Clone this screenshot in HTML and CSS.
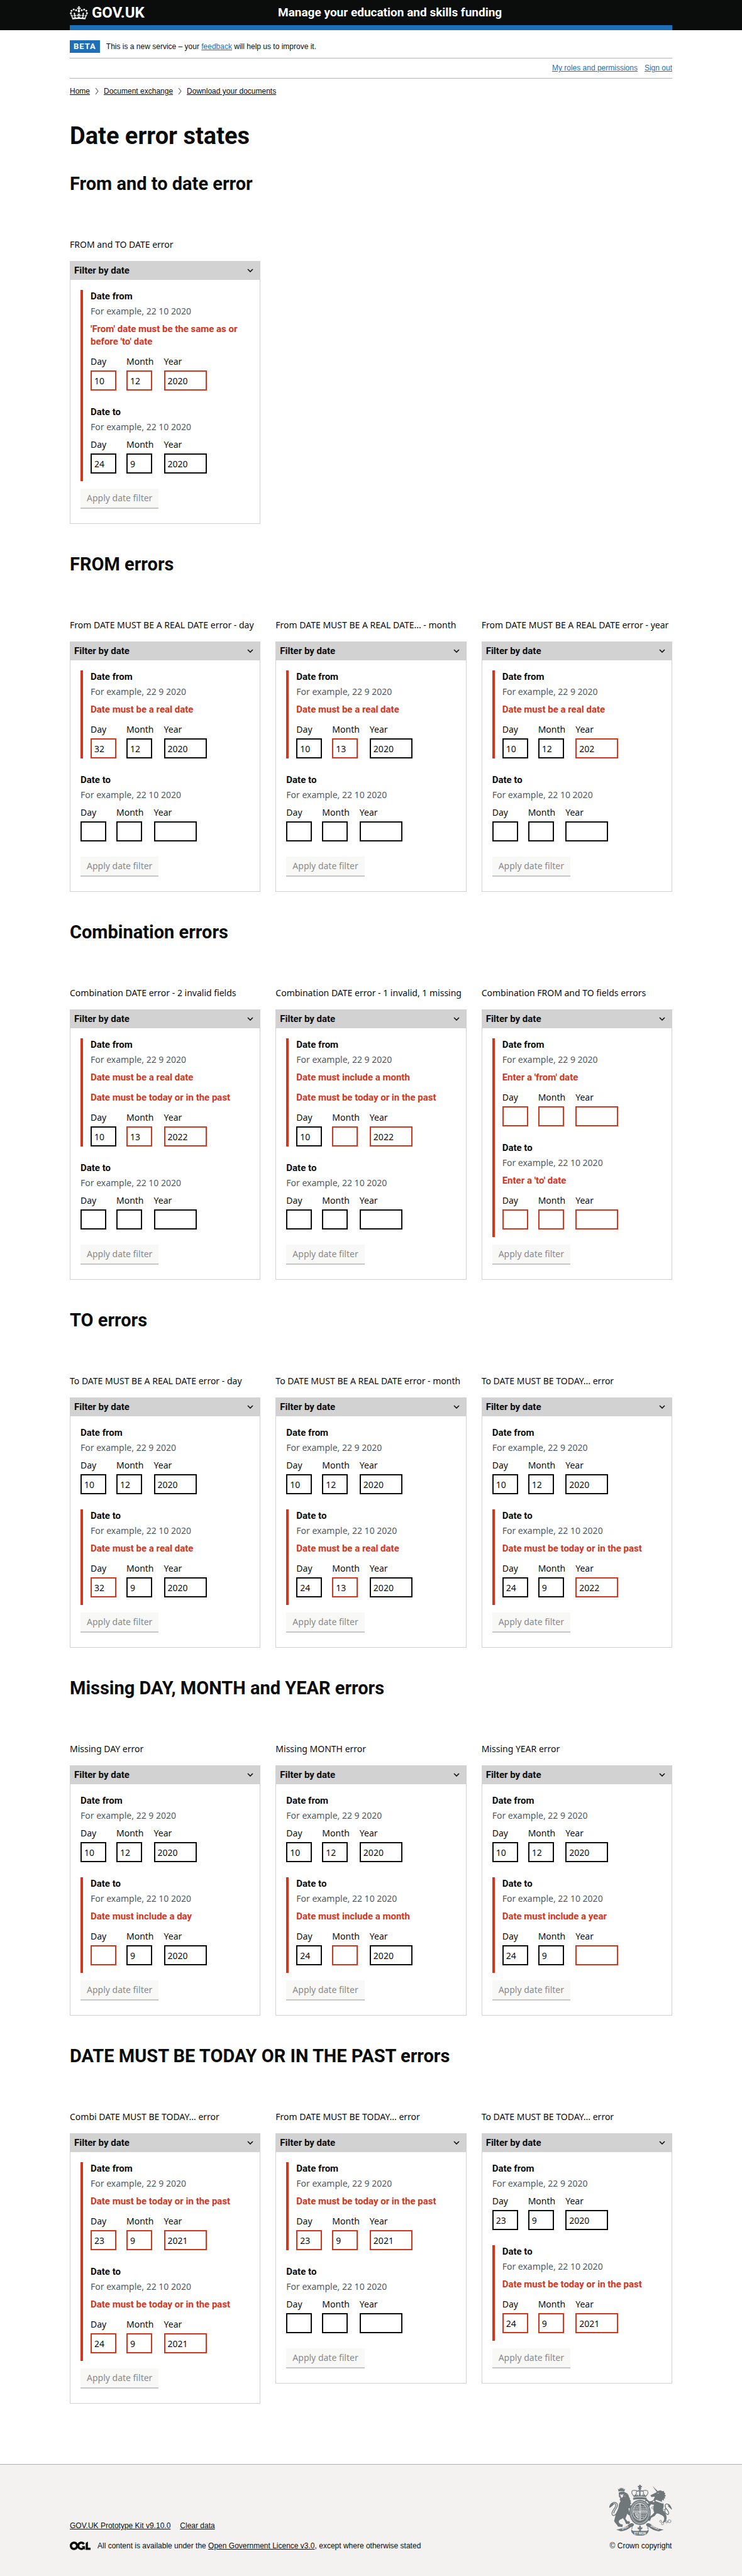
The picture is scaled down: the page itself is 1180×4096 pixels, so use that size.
FILE: index.html
```html
<!DOCTYPE html>
<html lang="en">
<head>
<meta charset="utf-8">
<meta name="viewport" content="width=device-width, initial-scale=1">
<title>Date error states - Manage your education and skills funding</title>
<link rel="stylesheet" href="styles.css">
</head>
<body>
<svg class="sprite" aria-hidden="true">
  <symbol id="chevron-down" viewBox="0 0 10 6"><path d="M1 1l4 4 4-4" fill="none" stroke="currentColor" stroke-width="1.6"/></symbol>
  <symbol id="chevron-right" viewBox="0 0 6 12"><path d="M1 1l4 5-4 5" fill="none" stroke="currentColor" stroke-width="1.1"/></symbol>
</svg>

<header class="header">
  <div class="header-inner">
    <a class="logo" href="#">
      <svg class="crown" viewBox="0 0 132 97" aria-hidden="true"><path fill="currentColor" fill-rule="evenodd" d="M25 30.2c3.5 1.5 7.7-.2 9.1-3.7 1.5-3.6-.2-7.8-3.9-9.2-3.6-1.4-7.6.3-9.1 3.9-1.4 3.5.3 7.5 3.9 9zM9 39.5c3.6 1.5 7.8-.2 9.2-3.7 1.5-3.6-.2-7.8-3.9-9.1-3.6-1.5-7.6.2-9.1 3.8-1.4 3.5.3 7.5 3.8 9zM4.4 57.2c3.5 1.5 7.7-.2 9.1-3.8 1.5-3.6-.2-7.7-3.9-9.1-3.5-1.5-7.6.3-9.1 3.8-1.4 3.5.3 7.6 3.9 9.1zm38.3-21.4c3.5 1.5 7.7-.2 9.1-3.8 1.5-3.6-.2-7.7-3.9-9.1-3.6-1.5-7.6.3-9.1 3.8-1.3 3.6.4 7.7 3.9 9.1zm64.4-5.6c-3.6 1.5-7.8-.2-9.1-3.7-1.5-3.6.2-7.8 3.8-9.2 3.6-1.4 7.7.3 9.2 3.9 1.3 3.5-.4 7.5-3.9 9zm15.9 9.3c-3.6 1.5-7.7-.2-9.1-3.7-1.5-3.6.2-7.8 3.7-9.1 3.6-1.5 7.7.2 9.2 3.8 1.5 3.5-.3 7.5-3.8 9zm4.7 17.7c-3.6 1.5-7.8-.2-9.2-3.8-1.5-3.6.2-7.7 3.9-9.1 3.6-1.5 7.7.3 9.2 3.8 1.3 3.5-.4 7.6-3.9 9.1zM89.3 35.8c-3.6 1.5-7.8-.2-9.2-3.8-1.4-3.6.2-7.7 3.9-9.1 3.6-1.5 7.7.3 9.2 3.8 1.4 3.6-.3 7.7-3.9 9.1zM69.7 17.7l8.9 4.7V9.3l-8.9 2.8c-.2-.3-.5-.6-.9-.9L72.4 0H59.6l3.5 11.2c-.3.3-.6.5-.9.9l-8.8-2.8v13.1l8.8-4.7c.3.3.6.7.9.9l-5 15.4v.1c-.2.8-.4 1.6-.4 2.4 0 4.1 3.1 7.5 7 8.1h.2c.3 0 .7.1 1 .1.4 0 .7 0 1-.1h.2c4-.6 7.1-4.1 7.1-8.1 0-.8-.1-1.7-.4-2.4V34l-5.1-15.4c.4-.2.7-.6 1-.9zM66 92.8c16.9 0 32.8 1.1 47.1 3.2 4-16.9 8.9-26.7 14-33.5l-9.6-3.4c1 4.9 1.1 7.2 0 10.2-1.5-1.4-3-4.3-4.2-8.7L108.6 76c2.8-2 5-3.2 7.5-3.3-4.4 9.4-10 11.9-13.6 11.2-4.3-.8-6.3-4.6-5.6-7.9 1-4.7 5.7-5.9 8-.5 4.3-8.7-3-11.4-7.6-8.8 7.1-7.2 7.9-13.5 2.1-21.1-8 6.1-8.1 12.3-4.5 20.8-4.7-5.4-12.1-2.5-9.5 6.2 3.4-5.2 7.9-2 7.2 3.1-.6 4.3-6.4 7.8-13.5 7.2-10.3-.9-10.9-8-11.2-13.8 2.5-.5 7.1 1.8 11 7.3L80.2 60c-4.1 4.4-8 5.3-12.3 5.4 1.4-4.4 8-11.6 8-11.6H55.5s6.4 7.2 7.9 11.6c-4.2-.1-8-1-12.3-5.4l1.4 16.4c3.9-5.5 8.5-7.7 10.9-7.3-.3 5.8-.9 12.8-11.1 13.8-7.2.6-12.9-2.9-13.5-7.2-.7-5 3.8-8.3 7.1-3.1 2.7-8.7-4.6-11.6-9.4-6.2 3.7-8.5 3.6-14.7-4.6-20.8-5.8 7.6-5 13.9 2.2 21.1-4.7-2.6-11.9.1-7.7 8.8 2.3-5.5 7.1-4.2 8.1.5.7 3.3-1.3 7.1-5.7 7.9-3.5.7-9-1.8-13.5-11.2 2.5.1 4.7 1.3 7.5 3.3l-4.7-15.4c-1.2 4.4-2.7 7.2-4.3 8.7-1.1-3-.9-5.3 0-10.2l-9.5 3.4c5 6.9 9.9 16.7 14 33.5 14.8-2.1 30.8-3.2 47.7-3.2z"/></svg>
      <span>GOV.UK</span>
    </a>
    <a class="service" href="#">Manage your education and skills funding</a>
  </div>
</header>

<div class="width">
  <div class="phase">
    <strong class="tag">BETA</strong>
    <span>This is a new service – your <a class="link" href="#">feedback</a> will help us to improve it.</span>
  </div>
  <nav class="account" aria-label="Account">
    <a class="link" href="#">My roles and permissions</a>
    <a class="link" href="#">Sign out</a>
  </nav>
  <nav class="breadcrumbs" aria-label="Breadcrumb">
    <a href="#">Home</a>
    <svg class="crumb-arrow" aria-hidden="true"><use href="#chevron-right"/></svg>
    <a href="#">Document exchange</a>
    <svg class="crumb-arrow" aria-hidden="true"><use href="#chevron-right"/></svg>
    <a href="#">Download your documents</a>
  </nav>
</div>

<main class="width main">
  <h1>Date error states</h1>

  <section>
    <h2>From and to date error</h2>
    <div class="examples">
      <article>
        <p class="caption">FROM and TO DATE error</p>
        <form class="filter">
          <button type="button" class="filter-title">Filter by date <svg aria-hidden="true"><use href="#chevron-down"/></svg></button>
          <div class="filter-body">
            <div class="failed">
              <fieldset>
                <legend>Date from</legend>
                <p class="hint">For example, 22 10 2020</p>
                <p class="message">'From' date must be the same as or before 'to' date</p>
                <div class="date"><label>Day<input class="bad" value="10"></label><label>Month<input class="bad" value="12"></label><label>Year<input class="year bad" value="2020"></label></div>
              </fieldset>
              <fieldset>
                <legend>Date to</legend>
                <p class="hint">For example, 22 10 2020</p>
                <div class="date"><label>Day<input value="24"></label><label>Month<input value="9"></label><label>Year<input class="year" value="2020"></label></div>
              </fieldset>
            </div>
            <button class="apply" disabled>Apply date filter</button>
          </div>
        </form>
      </article>
    </div>
  </section>

  <section>
    <h2>FROM errors</h2>
    <div class="examples">
      <article>
        <p class="caption">From DATE MUST BE A REAL DATE error - day</p>
        <form class="filter">
          <button type="button" class="filter-title">Filter by date <svg aria-hidden="true"><use href="#chevron-down"/></svg></button>
          <div class="filter-body">
            <div class="failed">
              <fieldset>
                <legend>Date from</legend>
                <p class="hint">For example, 22 9 2020</p>
                <p class="message">Date must be a real date</p>
                <div class="date"><label>Day<input class="bad" value="32"></label><label>Month<input value="12"></label><label>Year<input class="year" value="2020"></label></div>
              </fieldset>
            </div>
            <fieldset>
              <legend>Date to</legend>
              <p class="hint">For example, 22 10 2020</p>
              <div class="date"><label>Day<input></label><label>Month<input></label><label>Year<input class="year"></label></div>
            </fieldset>
            <button class="apply" disabled>Apply date filter</button>
          </div>
        </form>
      </article>
      <article>
        <p class="caption">From DATE MUST BE A REAL DATE... - month</p>
        <form class="filter">
          <button type="button" class="filter-title">Filter by date <svg aria-hidden="true"><use href="#chevron-down"/></svg></button>
          <div class="filter-body">
            <div class="failed">
              <fieldset>
                <legend>Date from</legend>
                <p class="hint">For example, 22 9 2020</p>
                <p class="message">Date must be a real date</p>
                <div class="date"><label>Day<input value="10"></label><label>Month<input class="bad" value="13"></label><label>Year<input class="year" value="2020"></label></div>
              </fieldset>
            </div>
            <fieldset>
              <legend>Date to</legend>
              <p class="hint">For example, 22 10 2020</p>
              <div class="date"><label>Day<input></label><label>Month<input></label><label>Year<input class="year"></label></div>
            </fieldset>
            <button class="apply" disabled>Apply date filter</button>
          </div>
        </form>
      </article>
      <article>
        <p class="caption">From DATE MUST BE A REAL DATE error - year</p>
        <form class="filter">
          <button type="button" class="filter-title">Filter by date <svg aria-hidden="true"><use href="#chevron-down"/></svg></button>
          <div class="filter-body">
            <div class="failed">
              <fieldset>
                <legend>Date from</legend>
                <p class="hint">For example, 22 9 2020</p>
                <p class="message">Date must be a real date</p>
                <div class="date"><label>Day<input value="10"></label><label>Month<input value="12"></label><label>Year<input class="year bad" value="202"></label></div>
              </fieldset>
            </div>
            <fieldset>
              <legend>Date to</legend>
              <p class="hint">For example, 22 10 2020</p>
              <div class="date"><label>Day<input></label><label>Month<input></label><label>Year<input class="year"></label></div>
            </fieldset>
            <button class="apply" disabled>Apply date filter</button>
          </div>
        </form>
      </article>
    </div>
  </section>

  <section>
    <h2>Combination errors</h2>
    <div class="examples">
      <article>
        <p class="caption">Combination DATE error - 2 invalid fields</p>
        <form class="filter">
          <button type="button" class="filter-title">Filter by date <svg aria-hidden="true"><use href="#chevron-down"/></svg></button>
          <div class="filter-body">
            <div class="failed">
              <fieldset>
                <legend>Date from</legend>
                <p class="hint">For example, 22 9 2020</p>
                <p class="message">Date must be a real date</p>
                <p class="message">Date must be today or in the past</p>
                <div class="date"><label>Day<input value="10"></label><label>Month<input class="bad" value="13"></label><label>Year<input class="year bad" value="2022"></label></div>
              </fieldset>
            </div>
            <fieldset>
              <legend>Date to</legend>
              <p class="hint">For example, 22 10 2020</p>
              <div class="date"><label>Day<input></label><label>Month<input></label><label>Year<input class="year"></label></div>
            </fieldset>
            <button class="apply" disabled>Apply date filter</button>
          </div>
        </form>
      </article>
      <article>
        <p class="caption">Combination DATE error - 1 invalid, 1 missing</p>
        <form class="filter">
          <button type="button" class="filter-title">Filter by date <svg aria-hidden="true"><use href="#chevron-down"/></svg></button>
          <div class="filter-body">
            <div class="failed">
              <fieldset>
                <legend>Date from</legend>
                <p class="hint">For example, 22 9 2020</p>
                <p class="message">Date must include a month</p>
                <p class="message">Date must be today or in the past</p>
                <div class="date"><label>Day<input value="10"></label><label>Month<input class="bad"></label><label>Year<input class="year bad" value="2022"></label></div>
              </fieldset>
            </div>
            <fieldset>
              <legend>Date to</legend>
              <p class="hint">For example, 22 10 2020</p>
              <div class="date"><label>Day<input></label><label>Month<input></label><label>Year<input class="year"></label></div>
            </fieldset>
            <button class="apply" disabled>Apply date filter</button>
          </div>
        </form>
      </article>
      <article>
        <p class="caption">Combination FROM and TO fields errors</p>
        <form class="filter">
          <button type="button" class="filter-title">Filter by date <svg aria-hidden="true"><use href="#chevron-down"/></svg></button>
          <div class="filter-body">
            <div class="failed">
              <fieldset>
                <legend>Date from</legend>
                <p class="hint">For example, 22 9 2020</p>
                <p class="message">Enter a 'from' date</p>
                <div class="date"><label>Day<input class="bad"></label><label>Month<input class="bad"></label><label>Year<input class="year bad"></label></div>
              </fieldset>
              <fieldset>
                <legend>Date to</legend>
                <p class="hint">For example, 22 10 2020</p>
                <p class="message">Enter a 'to' date</p>
                <div class="date"><label>Day<input class="bad"></label><label>Month<input class="bad"></label><label>Year<input class="year bad"></label></div>
              </fieldset>
            </div>
            <button class="apply" disabled>Apply date filter</button>
          </div>
        </form>
      </article>
    </div>
  </section>

  <section>
    <h2>TO errors</h2>
    <div class="examples">
      <article>
        <p class="caption">To DATE MUST BE A REAL DATE error - day</p>
        <form class="filter">
          <button type="button" class="filter-title">Filter by date <svg aria-hidden="true"><use href="#chevron-down"/></svg></button>
          <div class="filter-body">
            <fieldset>
              <legend>Date from</legend>
              <p class="hint">For example, 22 9 2020</p>
              <div class="date"><label>Day<input value="10"></label><label>Month<input value="12"></label><label>Year<input class="year" value="2020"></label></div>
            </fieldset>
            <div class="failed">
              <fieldset>
                <legend>Date to</legend>
                <p class="hint">For example, 22 10 2020</p>
                <p class="message">Date must be a real date</p>
                <div class="date"><label>Day<input class="bad" value="32"></label><label>Month<input value="9"></label><label>Year<input class="year" value="2020"></label></div>
              </fieldset>
            </div>
            <button class="apply" disabled>Apply date filter</button>
          </div>
        </form>
      </article>
      <article>
        <p class="caption">To DATE MUST BE A REAL DATE error - month</p>
        <form class="filter">
          <button type="button" class="filter-title">Filter by date <svg aria-hidden="true"><use href="#chevron-down"/></svg></button>
          <div class="filter-body">
            <fieldset>
              <legend>Date from</legend>
              <p class="hint">For example, 22 9 2020</p>
              <div class="date"><label>Day<input value="10"></label><label>Month<input value="12"></label><label>Year<input class="year" value="2020"></label></div>
            </fieldset>
            <div class="failed">
              <fieldset>
                <legend>Date to</legend>
                <p class="hint">For example, 22 10 2020</p>
                <p class="message">Date must be a real date</p>
                <div class="date"><label>Day<input value="24"></label><label>Month<input class="bad" value="13"></label><label>Year<input class="year" value="2020"></label></div>
              </fieldset>
            </div>
            <button class="apply" disabled>Apply date filter</button>
          </div>
        </form>
      </article>
      <article>
        <p class="caption">To DATE MUST BE TODAY... error</p>
        <form class="filter">
          <button type="button" class="filter-title">Filter by date <svg aria-hidden="true"><use href="#chevron-down"/></svg></button>
          <div class="filter-body">
            <fieldset>
              <legend>Date from</legend>
              <p class="hint">For example, 22 9 2020</p>
              <div class="date"><label>Day<input value="10"></label><label>Month<input value="12"></label><label>Year<input class="year" value="2020"></label></div>
            </fieldset>
            <div class="failed">
              <fieldset>
                <legend>Date to</legend>
                <p class="hint">For example, 22 10 2020</p>
                <p class="message">Date must be today or in the past</p>
                <div class="date"><label>Day<input value="24"></label><label>Month<input value="9"></label><label>Year<input class="year bad" value="2022"></label></div>
              </fieldset>
            </div>
            <button class="apply" disabled>Apply date filter</button>
          </div>
        </form>
      </article>
    </div>
  </section>

  <section>
    <h2>Missing DAY, MONTH and YEAR errors</h2>
    <div class="examples">
      <article>
        <p class="caption">Missing DAY error</p>
        <form class="filter">
          <button type="button" class="filter-title">Filter by date <svg aria-hidden="true"><use href="#chevron-down"/></svg></button>
          <div class="filter-body">
            <fieldset>
              <legend>Date from</legend>
              <p class="hint">For example, 22 9 2020</p>
              <div class="date"><label>Day<input value="10"></label><label>Month<input value="12"></label><label>Year<input class="year" value="2020"></label></div>
            </fieldset>
            <div class="failed">
              <fieldset>
                <legend>Date to</legend>
                <p class="hint">For example, 22 10 2020</p>
                <p class="message">Date must include a day</p>
                <div class="date"><label>Day<input class="bad"></label><label>Month<input value="9"></label><label>Year<input class="year" value="2020"></label></div>
              </fieldset>
            </div>
            <button class="apply" disabled>Apply date filter</button>
          </div>
        </form>
      </article>
      <article>
        <p class="caption">Missing MONTH error</p>
        <form class="filter">
          <button type="button" class="filter-title">Filter by date <svg aria-hidden="true"><use href="#chevron-down"/></svg></button>
          <div class="filter-body">
            <fieldset>
              <legend>Date from</legend>
              <p class="hint">For example, 22 9 2020</p>
              <div class="date"><label>Day<input value="10"></label><label>Month<input value="12"></label><label>Year<input class="year" value="2020"></label></div>
            </fieldset>
            <div class="failed">
              <fieldset>
                <legend>Date to</legend>
                <p class="hint">For example, 22 10 2020</p>
                <p class="message">Date must include a month</p>
                <div class="date"><label>Day<input value="24"></label><label>Month<input class="bad"></label><label>Year<input class="year" value="2020"></label></div>
              </fieldset>
            </div>
            <button class="apply" disabled>Apply date filter</button>
          </div>
        </form>
      </article>
      <article>
        <p class="caption">Missing YEAR error</p>
        <form class="filter">
          <button type="button" class="filter-title">Filter by date <svg aria-hidden="true"><use href="#chevron-down"/></svg></button>
          <div class="filter-body">
            <fieldset>
              <legend>Date from</legend>
              <p class="hint">For example, 22 9 2020</p>
              <div class="date"><label>Day<input value="10"></label><label>Month<input value="12"></label><label>Year<input class="year" value="2020"></label></div>
            </fieldset>
            <div class="failed">
              <fieldset>
                <legend>Date to</legend>
                <p class="hint">For example, 22 10 2020</p>
                <p class="message">Date must include a year</p>
                <div class="date"><label>Day<input value="24"></label><label>Month<input value="9"></label><label>Year<input class="year bad"></label></div>
              </fieldset>
            </div>
            <button class="apply" disabled>Apply date filter</button>
          </div>
        </form>
      </article>
    </div>
  </section>

  <section>
    <h2>DATE MUST BE TODAY OR IN THE PAST errors</h2>
    <div class="examples">
      <article>
        <p class="caption">Combi DATE MUST BE TODAY... error</p>
        <form class="filter">
          <button type="button" class="filter-title">Filter by date <svg aria-hidden="true"><use href="#chevron-down"/></svg></button>
          <div class="filter-body">
            <div class="failed">
              <fieldset>
                <legend>Date from</legend>
                <p class="hint">For example, 22 9 2020</p>
                <p class="message">Date must be today or in the past</p>
                <div class="date"><label>Day<input class="bad" value="23"></label><label>Month<input class="bad" value="9"></label><label>Year<input class="year bad" value="2021"></label></div>
              </fieldset>
              <fieldset>
                <legend>Date to</legend>
                <p class="hint">For example, 22 10 2020</p>
                <p class="message">Date must be today or in the past</p>
                <div class="date"><label>Day<input class="bad" value="24"></label><label>Month<input class="bad" value="9"></label><label>Year<input class="year bad" value="2021"></label></div>
              </fieldset>
            </div>
            <button class="apply" disabled>Apply date filter</button>
          </div>
        </form>
      </article>
      <article>
        <p class="caption">From DATE MUST BE TODAY... error</p>
        <form class="filter">
          <button type="button" class="filter-title">Filter by date <svg aria-hidden="true"><use href="#chevron-down"/></svg></button>
          <div class="filter-body">
            <div class="failed">
              <fieldset>
                <legend>Date from</legend>
                <p class="hint">For example, 22 9 2020</p>
                <p class="message">Date must be today or in the past</p>
                <div class="date"><label>Day<input class="bad" value="23"></label><label>Month<input class="bad" value="9"></label><label>Year<input class="year bad" value="2021"></label></div>
              </fieldset>
            </div>
            <fieldset>
              <legend>Date to</legend>
              <p class="hint">For example, 22 10 2020</p>
              <div class="date"><label>Day<input></label><label>Month<input></label><label>Year<input class="year"></label></div>
            </fieldset>
            <button class="apply" disabled>Apply date filter</button>
          </div>
        </form>
      </article>
      <article>
        <p class="caption">To DATE MUST BE TODAY... error</p>
        <form class="filter">
          <button type="button" class="filter-title">Filter by date <svg aria-hidden="true"><use href="#chevron-down"/></svg></button>
          <div class="filter-body">
            <fieldset>
              <legend>Date from</legend>
              <p class="hint">For example, 22 9 2020</p>
              <div class="date"><label>Day<input value="23"></label><label>Month<input value="9"></label><label>Year<input class="year" value="2020"></label></div>
            </fieldset>
            <div class="failed">
              <fieldset>
                <legend>Date to</legend>
                <p class="hint">For example, 22 10 2020</p>
                <p class="message">Date must be today or in the past</p>
                <div class="date"><label>Day<input class="bad" value="24"></label><label>Month<input class="bad" value="9"></label><label>Year<input class="year bad" value="2021"></label></div>
              </fieldset>
            </div>
            <button class="apply" disabled>Apply date filter</button>
          </div>
        </form>
      </article>
    </div>
  </section>
</main>

<footer class="footer">
  <div class="width footer-inner">
    <div class="footer-meta">
      <div class="footer-links">
        <a href="#">GOV.UK Prototype Kit v9.10.0</a>
        <a href="#">Clear data</a>
      </div>
      <div class="licence">
        <svg class="ogl" viewBox="0 0 483.2 195.7" role="img" aria-label="Open Government Licence"><path fill="currentColor" d="M421.5 142.8V.1l-50.7 32.3v161.1h112.4v-50.7zm-122.3-9.6A47.12 47.12 0 0 1 221 97.8c0-26 21.1-47.1 47.1-47.1 16.7 0 31.4 8.7 39.7 21.8l42.7-27.2A97.63 97.63 0 0 0 268.1 0c-36.5 0-68.3 20.1-85.1 49.7A98 98 0 0 0 97.8 0C43.9 0 0 43.9 0 97.8s43.9 97.8 97.8 97.8c36.5 0 68.3-20.1 85.1-49.7a97.76 97.76 0 0 0 149.6 25.4l19.4 22.2h3v-87.8h-80l24.3 27.5zM97.8 145c-26 0-47.1-21.1-47.1-47.1s21.1-47.1 47.1-47.1 47.1 21.1 47.1 47.1S123.8 145 97.8 145"/></svg>
        <span>All content is available under the <a href="#">Open Government Licence v3.0</a>, except where otherwise stated</span>
      </div>
    </div>
    <a class="copyright" href="#">
      <svg class="arms" viewBox="93 90 375 306" aria-hidden="true">
        <g fill="#6f777b">
          <!-- crown -->
          <path d="M271 90h9v7h7v8h-6l3 8-5 7v30h-8v-30l-5-7 3-8h-6v-8h8z"/>
          <path d="M234 168c17-6 66-6 83 0l-2 13c-18-5-61-5-79 0z"/>
          <path d="M238 164l-2-14 7 5 6-11 6 10 7-5 4 8 9-15 9 15 4-8 7 5 6-10 6 11 8-5-3 14c-19-5-55-5-74 0z"/>
          <g fill="none" stroke="#6f777b" stroke-width="5" stroke-dasharray="5 1">
            <path d="M238 157c-18-18-14-35 5-34 14 1 26 10 32 2 6 8 18-1 32-2 19-1 23 16 6 34"/>
            <path d="M257 149c-7-12-3-23 13-25M294 149c7-12 3-23-13-25"/>
          </g>
          <!-- lion -->
          <path d="M147 131l-4-18 8 5 4-9 5 5 3-9 5 8 7-5 2 10 9-4-4 17c-10-4-24-4-35 0z"/>
          <path d="M148 137c14-8 32-8 42 0 12 4 18 14 20 26l7 12-3 2 9 12-5 2 6 12-7 3 2 8 13 5 5-6 6 8-8 8 4 7-8 4-11-9-14 1 7 24 8 13-10 5-13-10c-3 18-12 28-8 32l12 14 8-3 6 9-4 9h-20l-8-20-11-15c-9 8-18 8-22 14-7 10 2 18 10 22l12 4-3 13-26-2c-6-9-12-18-17-22l-7-12 7-25c2-22 18-42 20-58 1-18 6-28 12-34l-5-12 4-8-8-7z"/>
          <path fill="none" stroke="#6f777b" stroke-width="5" d="M136 258c-8 18-24 22-28 8-4-16 14-30 20-44 7-18-4-24-13-14-8 8-12 12-21 17 1-15 12-25 24-29 19-2 26 10 20 26-6 15-20 27-20 40"/>
          <path d="M94 225c0-15 9-26 24-29l-4 15z"/>
          <path fill="#f3f2f1" d="M158 147l8 3 8-3 5 3-7 3 3 7-8 7-9-5 6-5-8-2zM183 153l6 9-5-2z"/>
          <!-- unicorn -->
          <path d="M350 96l34 34-7 4zM376 134l11-8 12-3 12 6 9-2v8l8 6-4 7 8 8-7 5 2 12-8-2 1 14-9-5-5 9c12 10 14 20 12 34l-6 18c10 12 18 18 21 31 6 14 3 27-4 38l-10 8-6-3 7-13c5-18-4-25-14-30-14-7-26-14-32-8l-10 13-20 10-8 19h-12l-5-8 9-13 19-13 15-16c-8-12-8-32-2-46l-18-3-10 14-12 4-5-7 9-6-5-8 10-2-12-14-8 2-3-9 12-5 13 13 14-1 12-7 8-20-20 3-7-11z"/>
          <path fill="none" stroke="#6f777b" stroke-width="5" d="M430 232c-10 14-6 24 6 34 10 8 14-2 12-10-3-15-20-22-21-36-1-16 10-20 21-10 8 7 13 16 18 27"/>
          <path d="M467 238c-3-16-9-29-23-34l2 17z"/>
          <path fill="#f3f2f1" d="M372 180l43 16-2 7-45-16zM380 141l9-3-4 6z"/>
          <g fill="#f3f2f1" stroke="#6f777b" stroke-width="3"><circle cx="358" cy="190" r="6"/><circle cx="352" cy="228" r="6"/><circle cx="420" cy="243" r="6"/><circle cx="400" cy="309" r="6"/><circle cx="411" cy="323" r="7"/><circle cx="436" cy="313" r="6"/><circle cx="453" cy="309" r="9"/></g>
          <!-- garter and shield -->
          <ellipse cx="276" cy="256" rx="64" ry="76"/>
          <ellipse cx="276" cy="256" rx="54" ry="66" fill="none" stroke="#f3f2f1" stroke-width="8" stroke-dasharray="3 5"/>
          <ellipse cx="276" cy="252" rx="45" ry="52" fill="#f3f2f1"/>
          <ellipse cx="276" cy="252" rx="42" ry="49"/>
          <path fill="none" stroke="#f3f2f1" stroke-width="3" d="M273 203v98M279 203v98M234 249h84M234 255h84"/>
          <path fill="none" stroke="#f3f2f1" stroke-width="4" stroke-dasharray="6 4" d="M243 222h28M240 232h30M239 241h31M283 222h24M283 234h31M283 243h31M283 264h31M283 275h28M283 286h22"/>
          <path fill="none" stroke="#f3f2f1" stroke-width="3" d="M245 262c8 10 10 20 20 30M252 262v20M260 262v26M245 264c8-4 16-4 22 0l-2 28"/>
          <!-- motto scroll -->
          <path d="M133 359c30-4 60-18 80-34 16-10 30-2 26 8l-12 14c-5 8-1 14 8 20h82c9-6 13-12 8-20l-12-14c-4-10 10-18 26-8 20 16 50 30 80 34l-30 11c-24-4-46-14-62-28l-8 6 8 12c4 12-6 20-14 28-18 10-58 10-75 0-9-8-18-16-14-28l8-12-8-6c-16 14-38 24-62 28z"/>
          <path fill="#f3f2f1" d="M236 346c10-8 12-16 32-16l-8 16 16 22 16-22-8-16c20 0 22 8 32 16l-8 18h-64z"/>
          <path d="M276 332l7 11-3 6 8-4 4 6-8 7h-5l5 9-8 5-8-5 5-9h-5l-8-7 4-6 8 4-3-6z"/>
        </g>
        <g class="motto" text-anchor="middle">
          <text x="276" y="389">ET MON</text>
          <text transform="translate(188 352) rotate(-24)">DIEU</text>
          <text transform="translate(363 352) rotate(26)">DROIT</text>
        </g>
      </svg>
      <span>© Crown copyright</span>
    </a>
  </div>
</footer>
</body>
</html>
```
FILE: styles.css
```css
* { box-sizing: border-box; }

body {
  margin: 0;
  background: #fff;
  color: #0b0c0c;
  font: 14px/20px "Noto Sans", sans-serif;
}

h1, h2, p { margin: 0; }
a { color: inherit; }
.link { color: #1d70b8; }
.sprite { display: none; }

.width, .header-inner {
  width: calc(100% - 48px);
  max-width: 958px;
  margin: 0 auto;
}

/* Header */
.header { background: #0b0c0c; color: #fff; }
.header a { text-decoration: none; font-family: Roboto, sans-serif; font-weight: 700; }
.header-inner {
  display: grid;
  grid-template-columns: 331px 1fr;
  align-items: center;
  height: 48px;
  border-bottom: 8px solid #1d70b8;
}
.logo { display: flex; align-items: center; gap: 6px; font-size: 24px; line-height: 24px; }
.crown { width: 29px; height: 21px; }
.service { font-size: 19px; line-height: 24px; }

/* Phase banner and navigation */
.phase, .account, .breadcrumbs, .footer {
  font: 12px/20px "Liberation Sans", sans-serif;
}
.phase {
  display: flex;
  align-items: center;
  gap: 10px;
  padding: 16px 0 8px;
  border-bottom: 1px solid #b1b4b6;
}
.tag {
  padding: 0 6px;
  background: #1d70b8;
  color: #fff;
  font: 700 13px/20px Roboto, sans-serif;
  letter-spacing: 1px;
}
.account {
  display: flex;
  justify-content: flex-end;
  gap: 11px;
  padding: 5px 0 6px;
  border-bottom: 1px solid #b1b4b6;
}
.breadcrumbs {
  display: flex;
  align-items: center;
  gap: 8px;
  padding: 10px 0 0;
}
.crumb-arrow { width: 6px; height: 12px; color: #505a5f; }

/* Headings */
.main { padding: 41px 0 96px; }
h1 { font: 700 38px/40px Roboto, sans-serif; margin-bottom: 40px; }
h2 { font: 700 29px/32px Roboto, sans-serif; margin-bottom: 71px; }
section + section { margin-top: 48px; }

/* Examples */
.examples {
  display: grid;
  grid-template-columns: repeat(3, 1fr);
  align-items: start;
  gap: 24px;
}
.caption { margin-bottom: 16px; white-space: nowrap; }
.filter { border: 1px solid #d2d2d2; border-top: 0; }
.filter-title {
  display: flex;
  align-items: center;
  justify-content: space-between;
  width: 100%;
  height: 30px;
  padding: 0 10px 0 6px;
  border: 0;
  background: #d2d2d2;
  color: inherit;
  font: 700 15px/20px Roboto, sans-serif;
}
.filter-title svg { width: 10px; height: 6px; }
.filter-body { padding: 16px 16px 23px; }

fieldset { min-width: 0; margin: 0 0 24px; padding: 0; border: 0; }
legend { margin-bottom: 4px; padding: 0; font: 700 15px/20px Roboto, sans-serif; }
.hint { margin-bottom: 8px; color: #505a5f; }
.message {
  margin-bottom: 12px;
  color: #d4351c;
  font: 700 15px/20px Roboto, sans-serif;
}
.message + .message { margin-top: 12px; }
.message:has(+ .message) { margin-bottom: 0; }

.failed {
  margin-bottom: 24px;
  padding-left: 12px;
  border-left: 4px solid #d4351c;
}
.failed fieldset:last-child { margin-bottom: 0; }
.failed:has(+ .apply) { margin-bottom: 12px; padding-bottom: 12px; }

.date { display: flex; gap: 16px; }
.date label { min-width: 41px; }
input {
  display: block;
  width: 41px;
  height: 32px;
  margin-top: 4px;
  padding: 0 4px;
  border: 2px solid #0b0c0c;
  border-radius: 0;
  background: #fff;
  color: inherit;
  font: inherit;
}
input.year { width: 68px; }
input.bad { border-color: #d4351c; }

.apply {
  display: block;
  height: 32px;
  padding: 0 10px;
  border: 0;
  border-bottom: 2px solid #929191;
  background: #f3f2f1;
  color: #0b0c0c;
  font: inherit;
  opacity: 0.5;
}

/* Footer */
.footer { border-top: 1px solid #b1b4b6; background: #f3f2f1; }
.footer-inner {
  display: flex;
  align-items: flex-end;
  justify-content: space-between;
  padding: 32px 0 38px;
}
.footer-links { display: flex; gap: 15px; margin-bottom: 12px; }
.licence { display: flex; align-items: center; gap: 11px; }
.ogl { width: 33px; height: 14px; }
.copyright {
  display: flex;
  flex-direction: column;
  align-items: center;
  gap: 6px;
  text-decoration: none;
}
.arms { width: 100px; height: 81px; }
.motto { fill: #f3f2f1; font: 700 19px Roboto, sans-serif; }
```
